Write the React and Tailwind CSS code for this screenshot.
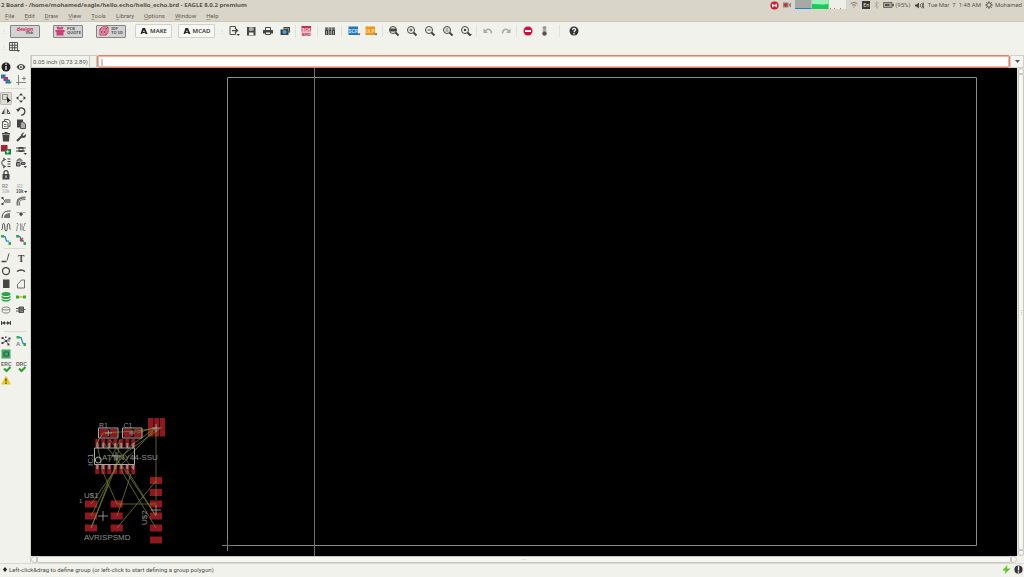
import React from "react";

const D = "#444444";

const Icon = ({ children, size = "size-3" }) => (
  <svg viewBox="0 0 24 24" className={`${size} shrink-0`} fill="none" stroke={D} strokeWidth="2.5" aria-hidden="true">
    {children}
  </svg>
);

const Caret = ({ x = 17, y = 18 }) => <path d={`M${x} ${y}h7l-3.5 4z`} fill={D} stroke="none" />;

const Mag = ({ children }) => (
  <Icon>
    <circle cx="10" cy="10" r="7" strokeWidth="2" />
    <path d="M15 15l6 6" strokeWidth="4" />
    {children}
  </Icon>
);

const Txt = ({ x, y, s = 9, f = D, children, w = "700" }) => (
  <text x={x} y={y} fontSize={s} fill={f} stroke="none" fontWeight={w} fontFamily="'Liberation Sans', sans-serif">
    {children}
  </text>
);

const topGroups = [
  {
    sep: "w-1",
    gap: "gap-0",
    items: [
      ["Open", <Icon><path d="M15 6V3H4v16h11v-3" strokeWidth="1.8" /><path d="M8 11h10M14 6l5 5-5 5" /><Caret /></Icon>],
      ["Save", <Icon><path d="M4 4h17v17H4z" fill={D} stroke="none" /><path d="M8 5h9v6H8zM8 15h9v5H8z" fill="#f1f2ec" stroke="none" /><path d="M8 8h9" strokeWidth="1.5" /></Icon>],
      ["Print", <Icon><path d="M2 10h20v7H2z" fill={D} stroke="none" /><path d="M7 10V5h10v5M7 14h10v5H7z" fill="#f1f2ec" strokeWidth="2" /></Icon>],
      ["CAM", <Icon><path d="M9 4h13v11h-3v5H3V9h6z" fill={D} stroke="none" /><circle cx="11" cy="14" r="4" fill="#2fb0e8" stroke="none" /><path d="M10 7h9v6" stroke="#ddd" strokeWidth="1" /></Icon>],
    ],
  },
  {
    sep: "w-[7px]",
    gap: "gap-0",
    items: [["Schematic", <Icon><path d="M3 2h19v11H3z" fill="#c8324f" stroke="none" /><path d="M3 13h19v9H3z" fill="#e7c3c9" stroke="none" /><Txt x="4" y="11" s="8" f="#fff">SCH</Txt><Txt x="4" y="21" s="8" f="#c8324f">BRD</Txt></Icon>]],
  },
  {
    sep: "w-[7px]",
    gap: "gap-0",
    items: [["Library", <Icon><path d="M2 5h6v15H2zM9 5h6v15H9zM16 5h6v15h-6z" fill={D} stroke="none" /><path d="M1 8h22" stroke="#bbb" strokeWidth="1.5" /><path d="M5 12v7M12 12v7M19 12v7" stroke="#bbb" strokeWidth="1.5" /></Icon>]],
  },
  {
    sep: "w-1.5",
    gap: "gap-0",
    items: [
      ["Script", <Icon size="w-3.5 h-3"><path d="M1 3h19v17H1z" fill="#2277bd" stroke="none" /><Txt x="1" y="15" s="9" f="#cfe6f7">SCR</Txt><path d="M19 17h6l-3 4z" fill={D} stroke="none" /></Icon>],
      ["ULP", <Icon size="w-3.5 h-3"><path d="M1 3h19v17H1z" fill="#ee9416" stroke="none" /><Txt x="1" y="15" s="9" f="#fbe3ba">ULP</Txt><path d="M19 17h6l-3 4z" fill={D} stroke="none" /></Icon>],
    ],
  },
  {
    sep: "w-[5px]",
    gap: "gap-px",
    items: [
      ["Zoom to fit", <Mag><path d="M4 10h12" strokeWidth="6" /></Mag>],
      ["Zoom in", <Mag><path d="M7 10h6M10 7v6" strokeWidth="2" /></Mag>],
      ["Zoom out", <Mag><path d="M7 10h6" strokeWidth="2" /></Mag>],
      ["Redraw", <Mag><path d="M7 8h6M7 12h6" strokeWidth="1.500" /></Mag>],
      ["Zoom select", <Mag><circle cx="10" cy="10" r="2.500" fill={D} stroke="none" /><Caret /></Mag>],
    ],
  },
  {
    sep: "w-[5px]",
    gap: "gap-px",
    items: [
      ["Undo", <Icon><path d="M7 12c4-6 12-4 12 5" stroke="#a9a9a5" strokeWidth="3" /><path d="M3 7v9h9z" fill="#a9a9a5" stroke="none" /></Icon>],
      ["Redo", <Icon><path d="M17 12c-4-6-12-4-12 5" stroke="#a9a9a5" strokeWidth="3" /><path d="M21 7v9h-9z" fill="#a9a9a5" stroke="none" /></Icon>],
    ],
  },
  {
    sep: "w-3",
    gap: "gap-0",
    items: [
      ["Stop", <Icon><circle cx="12" cy="12" r="9" fill="#d00f3c" stroke="none" /><path d="M6 12h12" stroke="#fff" strokeWidth="4" /></Icon>],
      ["Go", <Icon><circle cx="11" cy="6" r="4" fill="#999" stroke="none" /><circle cx="11" cy="17" r="4.5" fill="#555" stroke="none" /><path d="M7 11.5h8" strokeWidth="1" /></Icon>],
    ],
  },
  {
    sep: "",
    gap: "gap-0",
    items: [["Help", <Icon><circle cx="12" cy="12" r="9" fill="#333" stroke="none" /><path d="M9 10c0-5 7-4 6 0-1 2-3 2-3 4.500M12 16v3" stroke="#fff" /></Icon>]],
  },
];

const palette = [
  {
    h: "h-[26px]",
    rows: "grid-rows-2",
    items: [
      ["Info", <Icon><circle cx="12" cy="12" r="9" fill="#222" stroke="none" /><path d="M12 10v8M12 5v3" stroke="#fff" /></Icon>],
      ["Show", <Icon><path d="M3 12c5-8 13-8 18 0-5 8-13 8-18 0z" fill={D} stroke="none" /><circle cx="12" cy="12" r="4" fill="#fff" stroke="none" /><circle cx="12" cy="12" r="2" fill={D} stroke="none" /></Icon>],
      ["Display", <Icon size="w-3.5 h-3"><path d="M2 1h9v8H2z" fill="#2673b8" stroke="none" /><path d="M7 6h9v8H7z" fill="#c92a6b" stroke="none" /><path d="M11 11h9v8h-9z" fill="#2673b8" stroke="none" /><path d="M16 15h8l-4 5z" fill="#2aa33a" stroke="none" /></Icon>],
      ["Mark", <Icon><path d="M7 2v20M2 17h20M14 9h8M18 5v8" strokeWidth="1.800" stroke="#777" /></Icon>],
    ],
  },
  {
    h: "h-[154px]",
    rows: "grid-rows-12",
    items: [
      ["Group", <Icon><path d="M5 5h10v10H5z" strokeWidth="1.6" stroke="#777" /><path d="M13 9l9 9-4 .5L15 22z" fill="#111" stroke="none" /></Icon>],
      ["Move", <Icon><path d="M12 2l4 5H8zM12 22l4-5H8zM2 12l5-4v8zM22 12l-5-4v8z" fill={D} stroke="none" /></Icon>],
      ["Mirror", <Icon><path d="M9 7v11H3z" fill={D} stroke="none" /><path d="M15 9v8h5z" strokeWidth="1.800" /><path d="M12 4v16" strokeWidth="1" stroke="#999" /></Icon>],
      ["Rotate", <Icon><path d="M6 11a7 7 0 1 1 6 9" /><path d="M2 8h9l-5 6z" fill={D} stroke="none" /></Icon>],
      ["Copy", <Icon><path d="M9 7V3h8l3 4v10h-3M5 7h8l3 4v10H5z" strokeWidth="1.8" /><path d="M8 13h5M8 17h5" strokeWidth="1.500" /></Icon>],
      ["Paste", <Icon><path d="M4 3h12v5h-5v11H4z" fill={D} stroke="none" /><path d="M11 8h6l4 4v9H11z" strokeWidth="1.8" fill="#aaa" /></Icon>],
      ["Delete", <Icon><path d="M5 8h14l-1 13H6zM4 4h16v3H4zM9 2h6v3H9z" fill={D} stroke="none" /></Icon>],
      ["Change", <Icon><path d="M4 20l10-10" strokeWidth="4" /><path d="M19 3l-4 5 2 2 5-4c1 8-5 9-8 7s-3-9 5-10z" fill={D} stroke="none" /></Icon>],
      ["Add", <Icon><path d="M2 2h13v13H2z" fill="#b51a37" stroke="none" /><path d="M10 10h12v11H10z" fill="#16813a" stroke="none" /><path d="M12 15.500h7M15.500 12v7" stroke="#fff" strokeWidth="1.5" /></Icon>],
      ["Replace", <Icon><path d="M7 6h10v10H7z" fill={D} stroke="none" /><path d="M2 8h20M2 14h18" strokeWidth="2" /><path d="M9 11h6" stroke="#fff" /><Caret /></Icon>],
      ["Pinswap", <Icon><path d="M9 5C2 5 2 19 9 19M6 2l5 3-5 3M6 16l5 3-5 3" strokeWidth="2" /><path d="M15 4h6M15 9h6M15 14h6M15 19h6" strokeWidth="2" /></Icon>],
      ["Gateswap", <Icon><path d="M4 9c0-7 10-7 10 0M3 11h7v7H3zM13 11h7v4h-7z" strokeWidth="2" fill="#999" /><Caret /></Icon>],
      ["Lock", <Icon><path d="M5 10h14v11H5z" fill={D} stroke="none" /><path d="M8 11V7c0-5 8-5 8 0v4" /><path d="M12 13v5" stroke="#fff" strokeWidth="2" /></Icon>, 2],
      ["Name", <Icon><Txt x="4" y="11" s="9" f="#888">R2</Txt><Txt x="4" y="21" s="9" f="#bbb">10k</Txt></Icon>],
      ["Value", <Icon><Txt x="4" y="11" s="9" f="#bbb">R2</Txt><Txt x="2" y="21" s="9" f="#555">10k</Txt><Caret x="18" /></Icon>],
      ["Smash", <Icon><path d="M3 4h4v4H3zM3 16h4v4H3z" fill={D} stroke="none" /><path d="M6 8l4 4-4 5" strokeWidth="1.500" /><path d="M10 8h11v8H10z" fill="#999" stroke="none" /></Icon>],
      ["Miter", <Icon><path d="M5 21v-7C5 8 9 5 21 5" strokeWidth="4" stroke="#777" /><path d="M9 21v-6c0-4 3-6 12-6" strokeWidth="1.500" /></Icon>],
      ["Split", <Icon><path d="M4 20C5 9 9 6 21 6" strokeWidth="2" /><path d="M8 20c0-7 3-9 12-10v10z" fill="#777" stroke="none" /></Icon>],
      ["Optimize", <Icon><path d="M3 9h6M15 9h6" strokeWidth="1.500" stroke="#888" /><path d="M12 8l4 4-4 5-4-5z" fill={D} stroke="none" /></Icon>],
      ["Meander", <Icon><path d="M3 17c4 1 0-12 4-12s1 15 5 15 1-15 5-15 1 12 4 12" strokeWidth="2" /></Icon>],
      ["Fanout", <Icon><path d="M3 5h3v4l-2 3v7H2M11 5v14M14 5v14M22 5h-3v4l-2 3v7h4" strokeWidth="1.500" stroke="#777" /></Icon>],
      ["Route", <Icon><path d="M5 5h5l3 9h5" stroke="#2488c9" /><path d="M2 2h6v5H2zM17 16h5v6h-5z" fill="#31ad4c" stroke="none" /></Icon>],
      ["Ripup", <Icon><path d="M5 5h5l3 9h5" stroke="#2488c9" /><path d="M2 2h6v5H2zM17 16h5v6h-5z" fill="#31ad4c" stroke="none" /><path d="M10 8l6 6M16 8l-6 6" stroke="#d42b45" /></Icon>],
    ],
  },
  {
    h: "h-[77px]",
    rows: "grid-rows-6",
    items: [
      ["Wire", <Icon><path d="M3 19h10" strokeWidth="3" /><path d="M14 17l4-14" strokeWidth="1.800" /></Icon>],
      ["Text", <Icon><text x="6" y="19" fontSize="19" fill={D} stroke="none" fontWeight="700" fontFamily="'Liberation Serif', serif">T</text></Icon>],
      ["Circle", <Icon><circle cx="12" cy="12" r="7" /></Icon>],
      ["Arc", <Icon><path d="M4 13c5-4 11-4 16 0" strokeWidth="3" /></Icon>],
      ["Rectangle", <Icon><path d="M6 3h13v17H6z" fill={D} stroke="none" /></Icon>],
      ["Polygon", <Icon><path d="M5 20v-7l8-9h6v16z" strokeWidth="1.500" /></Icon>],
      ["Via", <Icon><ellipse cx="12" cy="6" rx="9" ry="4" fill="#25a545" stroke="none" /><path d="M3 9c3 4 15 4 18 0v4c-3 4-15 4-18 0zM3 15c3 4 15 4 18 0v3c-3 4-15 4-18 0z" fill="#25a545" stroke="none" /></Icon>],
      ["Signal", <Icon><path d="M6 12h12" stroke="#d7d03e" strokeWidth="4" /><path d="M2 9h6v6H2zM16 9h6v6h-6z" fill="#35ad4c" stroke="none" /></Icon>],
      ["Hole", <Icon><ellipse cx="12" cy="9" rx="7.500" ry="3" strokeWidth="1.800" stroke="#777" /><path d="M4.500 9v6c0 4 15 4 15 0V9" strokeWidth="1.800" stroke="#777" /></Icon>],
      ["Attribute", <Icon><path d="M8 6h9v11H8z" fill="#888" strokeWidth="1.8" /><path d="M2 9h10M2 14h9M14 9v5M17 11h4" strokeWidth="1.8" /></Icon>],
      ["Dimension", <Icon><path d="M4 12h16M3 8v8M21 8v8" strokeWidth="2" /><path d="M4 12l6-4v8zM20 12l-6-4v8z" fill={D} stroke="none" /></Icon>, 2],
    ],
  },
  {
    h: "h-[51px]",
    rows: "grid-rows-4",
    items: [
      ["Ratsnest", <Icon><path d="M5 6l7 6 7-5M12 12l-7 4M12 12l5 7M12 12h8" strokeWidth="1.500" /><path d="M3 4h4v4H3zM17 5h4v4h-4zM3 14h4v4H3zM15 17h4v4h-4zM10 10h4v4h-4zM10 3h3v3h-3z" fill={D} stroke="none" /></Icon>],
      ["Autorouter", <Icon><path d="M6 5h6l4 12h4" stroke="#2488c9" /><path d="M3 2h6v5H3zM17 16h5v6h-5z" fill="#31ad4c" stroke="none" /><Txt x="2" y="22" s="12" f="#777">A</Txt></Icon>],
      ["Manufacturing", <Icon><path d="M3 3h18v18H3z" fill="#47a566" stroke="none" /><path d="M8 8h9v8H8z" stroke="#1c6d39" strokeWidth="2" /></Icon>, 2],
      ["ERC", <Icon><Txt x="2" y="9" s="10" f="#666">ERC</Txt><path d="M8 15l5 5 8-8" stroke="#2f9c2f" strokeWidth="4" /></Icon>],
      ["DRC", <Icon><Txt x="2" y="9" s="10" f="#666">DRC</Txt><path d="M8 15l5 5 8-8" stroke="#2f9c2f" strokeWidth="4" /></Icon>],
      ["Errors", <Icon><path d="M12 3l10 18H2z" fill="#f2c911" stroke="none" /><path d="M12 9v6M12 17v3" strokeWidth="2.500" /></Icon>, 2],
    ],
  },
];

const Sep = ({ w }) => (
  <span className={`${w} flex h-3 shrink-0 justify-center`}>
    <span className="w-px bg-[#e2e2dc]" />
  </span>
);

const brand = "flex h-[13px] w-[30px] items-center justify-center gap-0.5 rounded-[1px] border border-[#858585] bg-[#d3d3d3] text-[4px] leading-[4px] font-bold text-[#555]";
const plain = "flex h-[14px] w-[37px] items-center justify-center gap-0.5 rounded-[1px] border border-[#d2d2cd] bg-[#f7f7f4] text-[6px] leading-none font-semibold text-[#333]";

const Autodesk = () => (
  <svg viewBox="0 0 16 16" className="size-2" aria-hidden="true">
    <path d="M1 14L5 2h5l5 12h-4L8 6l-2 4h3l1 2H5l-1 2z" fill="#222" />
  </svg>
);

function Board() {
  const seven = [0, 1, 2, 3, 4, 5, 6];
  return (
    <svg viewBox="31 68 986 488" preserveAspectRatio="xMinYMin meet" className="block size-full" role="img" aria-label="Board layout">
      <g fill="none" stroke="#8c8c8c" strokeWidth="1">
        <path d="M227.500 77.500h749v468h-749z" />
        <path d="M222 545.500h12M227.500 540v11" stroke="#777" />
        <path d="M314.500 68v488" stroke="#6f6f6f" />
      </g>
      <g fill="#8f1820">
        <path d="M148 418h5.500v18.500H148zM154.300 418h5v18.500h-5zM160 418h5v18.500h-5z" />
        <path d="M99.500 429h8.500v8h-8.500zM110 429h7.500v8H110zM123.500 429h8v8h-8zM134 429h8v8h-8z" />
        {seven.map((i) => (
          <path key={i} d={`M${95.300 + i * 6} 439h4v8h-4zM${95.300 + i * 6} 465h4v9h-4z`} />
        ))}
        {[477, 489, 500.5, 512.5, 524.5, 536.5].map((y) => (
          <path key={y} d={`M150 ${y}h12v7h-12z`} />
        ))}
        {[500.5, 512.5, 524.5].map((y) => (
          <path key={y} d={`M85 ${y}h12v7H85zM110.700 ${y}h12v7h-12z`} />
        ))}
      </g>
      <g fill="#a98483">
        {seven.map((i) => (
          <path key={i} d={`M${96.300 + i * 6} 443h2v5h-2zM${96.300 + i * 6} 464h2v5h-2z`} />
        ))}
      </g>
      <g stroke="#7f8b2c" strokeWidth="0.700" fill="none">
        <path d="M91 504l24-34 5-28M91 516l28-56M91 528l26-64 15-20M91 528l17-44M97 442l5 28 15 34h39" />
        <path d="M103 433l34-2 19-3v72M137 433l20-6-24 17M162 427l-48 34M117 516l14-42M117 528l39-47M121 470l35 58M103 442l22 28 31 46M127 470l29 46M103 433l-6 10M110 440l24 30M156 428l-34 36M109 462l11-22" />
      </g>
      <g stroke="#a9a9a9" fill="none">
        <path d="M98.500 428h19.500v10H98.500zM122.500 428H142v10h-19.500zM94.500 448h40v16.500h-40z" />
        <circle cx="98.300" cy="460" r="3" />
        <path d="M98 516h10M103 511v10M151 510h10M156 505v10M112 456h8M116 452v8M105 433h7M108.500 430v6M129 433h6M132 430v6M152 428h8M156 424v8" strokeWidth="0.800" />
      </g>
      <g fill="#8f8f8f" fontFamily="'Liberation Sans', sans-serif">
        <text x="99" y="427.500" fontSize="7">R1</text>
        <text x="123.500" y="427.500" fontSize="7">C1</text>
        <text x="102" y="459.500" fontSize="8">ATTINY44-SSU</text>
        <text x="84" y="498" fontSize="8">U$1</text>
        <text x="79" y="503" fontSize="6">1</text>
        <text x="84" y="539.500" fontSize="8">AVRISPSMD</text>
        <text transform="translate(93 466) rotate(-90)" fontSize="8">IC1</text>
        <text transform="translate(147 525) rotate(-90)" fontSize="8">U$2</text>
      </g>
    </svg>
  );
}

export default function App() {
  return (
    <div className="flex h-screen flex-col overflow-hidden bg-[#f1f2ec] font-['Noto_Sans','Open_Sans',sans-serif] text-[6px] leading-none text-[#444]">
      <header className="bg-[#dad5c9]">
        <div className="flex h-2.5 items-center justify-between pr-0.5 pl-px">
          <h1 className="text-[6px] font-bold text-[#57534b]">2 Board - /home/mohamed/eagle/hello.echo/hello_echo.brd - EAGLE 8.0.2 premium</h1>
          <div className="flex h-full items-center text-[6px] text-[#5b5750]">
            <svg viewBox="0 0 20 20" className="mr-1 size-[9px]" aria-hidden="true">
              <circle cx="10" cy="10" r="9" fill="#dd1121" />
              <path d="M6 6v8M14 6v8M6 10h8" stroke="#fff" strokeWidth="3" />
            </svg>
            <svg viewBox="0 0 16 12" className="mr-1 h-1.5 w-2" aria-hidden="true">
              <path d="M0 1h11v10H0zM12 4l4-3v10l-4-3z" fill="#8c887f" />
              <circle cx="5.500" cy="6" r="3.500" fill="#d92727" />
            </svg>
            <svg viewBox="0 0 51 9" preserveAspectRatio="none" className="mr-1 h-[9px] w-[51px] self-start" aria-hidden="true">
              <path d="M0 0h16.500v9H0z" fill="#a7a9a7" />
              <path d="M0 8h16.500v1H0z" fill="#2481c5" />
              <path d="M17 0h16.500v9H17z" fill="#12cf55" />
              <path d="M17 0h16.500v4l-5 .5L17 4z" fill="#a4edbc" />
              <path d="M34 0h17v9H34z" fill="#efefe9" />
              <path d="M35 8.500h1M39 8.500h1M45 8.500h1" stroke="#d66" />
            </svg>
            <svg viewBox="0 0 16 12" className="mr-1 h-1.5 w-2" fill="none" stroke="#77736a" strokeWidth="2" aria-hidden="true">
              <path d="M1 4c4-4 10-4 14 0M4 7c2-2 6-2 8 0M8 9v2" />
            </svg>
            <span className="mr-1 flex h-2 w-2 items-center justify-center bg-[#3b3935] text-[5px] text-[#eee]">En</span>
            <svg viewBox="0 0 10 16" className="mr-1 h-2 w-[5px]" fill="none" stroke="#aaa69c" strokeWidth="1.500" aria-hidden="true">
              <path d="M1 4l8 8-4 3V1l4 3-8 8" />
            </svg>
            <svg viewBox="0 0 22 12" className="mr-px h-1.5 w-[11px]" aria-hidden="true">
              <path d="M1 1h17v10H1zM19 4h2v4h-2z" fill="#aaa79f" stroke="#55514a" strokeWidth="1.500" />
              <path d="M4 4h9v4H4z" fill="#55514a" />
            </svg>
            <span className="mr-1 font-['Roboto',sans-serif]">(95%)</span>
            <svg viewBox="0 0 18 14" className="mr-1 h-[7px] w-[9px]" fill="none" stroke="#4b4842" strokeWidth="1.800" aria-hidden="true">
              <path d="M0 5h3l5-4v12L3 9H0z" fill="#4b4842" stroke="none" />
              <path d="M10 4c2 2 2 4 0 6M13 2c3 3 3 7 0 10M16 1c2 4 2 8 0 12" />
            </svg>
            <time className="mr-1 font-['Roboto',sans-serif] whitespace-pre">Tue Mar  7  1:48 AM</time>
            <svg viewBox="0 0 16 16" className="mr-0.5 size-2" fill="none" stroke="#4b4842" aria-hidden="true">
              <circle cx="8" cy="8" r="4.500" strokeWidth="2" />
              <path d="M8 0v3M8 13v3M0 8h3M13 8h3M2.500 2.500l2 2M11.500 11.500l2 2M13.500 2.500l-2 2M2.500 13.500l2-2" strokeWidth="1.500" />
            </svg>
            <span className="font-['Roboto',sans-serif]">Mohamed</span>
          </div>
        </div>
        <nav className="flex h-[11px] items-center gap-[10px] pl-[5px] font-['Roboto',sans-serif] text-[6px] text-[#5f5b53]">
          {["File", "Edit", "Draw", "View", "Tools", "Library", "Options", "Window", "Help"].map((m) => (
            <button key={m}>
              <span className="underline decoration-[#a39f95] underline-offset-1">{m[0]}</span>
              {m.slice(1)}
            </button>
          ))}
        </nav>
      </header>

      <div className="flex h-[19px] items-center border-t border-[#cbc7bc]">
        <span className="w-2.5 pl-px text-[#ccc]">⋮</span>
        <div className="flex items-center gap-[13px]">
          <button className={brand} aria-label="Design Link">
            <span className="flex flex-col">
              <span className="text-[5px] text-[#d12b62]">design</span>
              <span className="self-end">link</span>
            </span>
          </button>
          <button className={brand}>
            <svg viewBox="0 0 20 20" className="size-2.5" aria-hidden="true">
              <path d="M1 8h18v4h-2v7H3v-7H1zM3 2l5-1 2 3 3-3 4 2-2 4H5z" fill="#cf3d77" />
            </svg>
            <span className="text-left">PCB<br />QUOTE</span>
          </button>
          <button className={brand}>
            <svg viewBox="0 0 20 20" className="size-2.5" fill="none" stroke="#cf2d5f" strokeWidth="2" aria-hidden="true">
              <path d="M2 6l5-4h11v11l-4 5H2zM2 6h12v12M14 6l4-4M5 10h6v4H5z" />
            </svg>
            <span className="text-left">IDF<br />TO 3D</span>
          </button>
        </div>
        <div className="ml-[9px] flex items-center gap-1.5">
          <button className={plain}><Autodesk />MAKE</button>
          <button className={plain}><Autodesk />MCAD</button>
        </div>
        <span className="w-2.5 pl-1 text-[#ccc]">⋮</span>
        {topGroups.map((g, n) => (
          <React.Fragment key={n}>
            <div className={`flex ${g.gap}`}>
              {g.items.map(([label, icon]) => (
                <button key={label} aria-label={label} className="flex w-[17px] items-center justify-center">{icon}</button>
              ))}
            </div>
            {g.sep && <Sep w={g.sep} />}
          </React.Fragment>
        ))}
      </div>

      <div className="flex h-[15px] items-center pb-0.5">
        <span className="w-2 pl-px text-[#ccc]">⋮</span>
        <button aria-label="Grid">
          <Icon><path d="M3 3h16v16H3zM8.500 3v16M13.500 3v16M3 8.500h16M3 13.500h16" strokeWidth="1.800" /><Caret /></Icon>
        </button>
      </div>

      <div className="flex min-h-0 flex-1">
        <aside className="flex w-[31px] shrink-0 flex-col border-r border-[#d5d5cf]">
          <div className="h-[5px] text-center text-[5px] leading-[4px] text-[#bbb]">···</div>
          {palette.map((g, n) => (
            <React.Fragment key={n}>
              {n > 0 && <hr className="mx-1 mt-0.5 mb-[3px] border-[#dcdcd6]" />}
              <div className={`grid w-[30px] shrink-0 grid-cols-2 ${g.h} ${g.rows}`}>
                {g.items.map(([label, icon, span]) => (
                  <span key={label} className={span ? "col-span-2 flex" : "flex"}>
                    <button
                      aria-label={label}
                      className={`flex w-3 items-center justify-center ${label === "Group" ? "rounded-xs bg-[#dddcd3] ring-1 ring-[#bdbcb3] ring-inset" : ""}`}
                    >
                      {icon}
                    </button>
                  </span>
                ))}
              </div>
            </React.Fragment>
          ))}
        </aside>

        <div className="flex min-w-0 flex-1 flex-col">
          <div className="flex h-[13px] shrink-0">
            <output className="flex w-[59px] items-center border border-[#c9c9c3] pl-px font-['Roboto',sans-serif] text-[6px] whitespace-nowrap text-[#555]">0.05 inch (0.73 2.89)</output>
            <span className="w-[7px] border-y border-r border-[#c9c9c3]" />
            <input aria-label="Command line" defaultValue="|" className="min-w-0 flex-1 rounded-xs border border-[#e0826a] bg-white px-0.5 text-[7px] text-[#333] ring-1 ring-[#f3b5a5] outline-none ring-inset" />
            <button aria-label="Command history" className="flex w-3.5 items-center justify-center border border-[#d0d0ca] bg-[#f4f4f0]">
              <svg viewBox="0 0 10 6" className="h-[3px] w-[5px]" aria-hidden="true"><path d="M0 0h10L5 6z" fill="#555" /></svg>
            </button>
          </div>
          <div className="flex min-h-0 flex-1">
            <main className="min-w-0 flex-1 bg-black"><Board /></main>
            <div className="flex w-[7px] shrink-0 flex-col items-center bg-[#e6e5de] pl-px text-[5px] text-[#999]">
              <span className="h-1.5 w-full rounded-t border border-[#c8c6bd] bg-[#f6f6f2]" />
              <span className="flex w-full flex-1 items-center justify-center rounded-xs border border-[#c8c6bd] bg-[#f6f6f2]">⋮</span>
              <span className="h-1.5 w-full rounded-b border border-[#c8c6bd] bg-[#f6f6f2]" />
            </div>
          </div>
          <div className="mr-[7px] flex h-[7px] shrink-0 text-[5px] leading-[4px] text-[#999]">
            <span className="w-1.5 rounded-l border border-[#c8c6bd] bg-[#f6f6f2]" />
            <span className="flex-1 rounded-xs border border-[#c8c6bd] bg-[#f6f6f2] text-center">···</span>
            <span className="w-1.5 rounded-r border border-[#c8c6bd] bg-[#f6f6f2]" />
          </div>
        </div>
      </div>

      <footer className="flex h-3.5 shrink-0 items-center border-t border-[#dad9d2] pr-px pb-0.5 pl-[3px]">
        <svg viewBox="0 0 8 10" className="mr-0.5 h-[5px] w-1" aria-hidden="true"><path d="M4 0l4 5-4 5-4-5z" fill="#222" /></svg>
        <p className="flex-1 font-['Roboto',sans-serif] text-[6px] text-[#4a4a4a]">Left-click&amp;drag to define group (or left-click to start defining a group polygon)</p>
        <svg viewBox="0 0 20 20" className="mr-[3px] size-[9px]" aria-hidden="true"><path d="M12 0L1 12h7l-2 8L19 8h-8z" fill="#5fc21e" /></svg>
        <svg viewBox="0 0 20 20" className="size-[9px]" aria-hidden="true"><circle cx="10" cy="10" r="9" fill="#333" /><path d="M10 3v9M10 14v3" stroke="#fff" strokeWidth="3" /></svg>
      </footer>
    </div>
  );
}
